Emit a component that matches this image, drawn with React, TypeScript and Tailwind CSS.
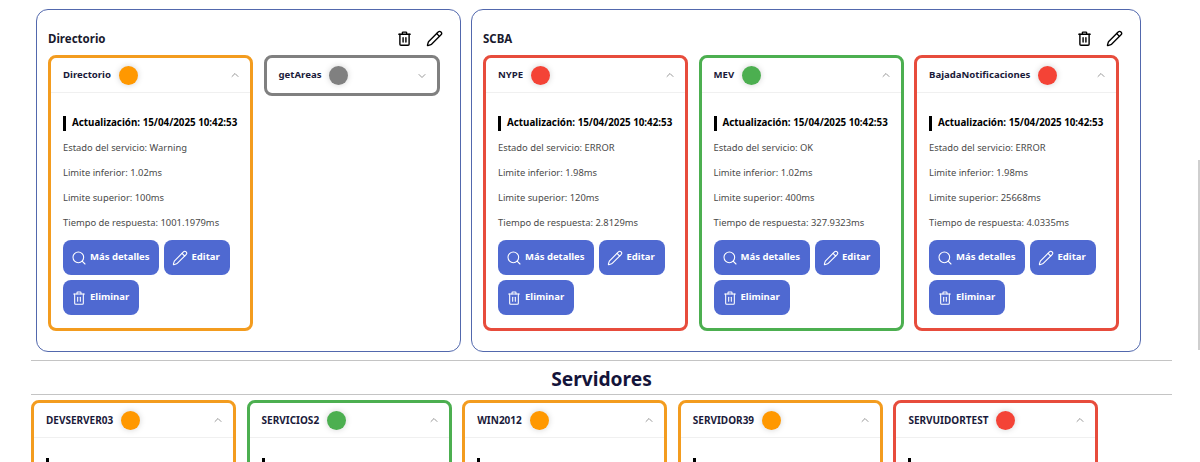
import { ChevronDown, ChevronUp, Pencil, Search } from "lucide-react";

const colors = {
  orange: { border: "border-[#f39c1f]", dot: "bg-[#ff9800]" },
  red: { border: "border-[#e74c3c]", dot: "bg-[#f44336]" },
  green: { border: "border-[#4caf50]", dot: "bg-[#4caf50]" },
  gray: { border: "border-[#808080]", dot: "bg-[#808080]" },
};
type C = keyof typeof colors;

function TrashIcon({ sw, className }: { sw: number; className: string }) {
  return (
    <svg viewBox="0 0 24 24" fill="none" stroke="currentColor" strokeWidth={sw} strokeLinecap="round" strokeLinejoin="round" className={className}>
      <path d="M4 6h16" />
      <path d="M9 6V4a1 1 0 0 1 1-1h4a1 1 0 0 1 1 1v2" />
      <path d="M5.5 6v14A1.5 1.5 0 0 0 7 21.5h10a1.5 1.5 0 0 0 1.5-1.5V6" />
      <path d="M10 11v6" />
      <path d="M14 11v6" />
    </svg>
  );
}

function Dot({ c }: { c: C }) {
  return <span className={`ml-2 h-[19px] w-[19px] shrink-0 rounded-full shadow-[0_0_6px_rgba(0,0,0,0.18)] ${colors[c].dot}`} />;
}

function Btn({ icon, label }: { icon: React.ReactNode; label: string }) {
  return (
    <button className="flex h-[35px] items-center gap-[3px] rounded-lg bg-[#4f69d1] pl-2 pr-[10px] text-[9.5px] font-bold text-white">
      {icon}
      {label}
    </button>
  );
}

type CardData = { name: string; c: C; estado: string; inf: string; sup: string; t: string };

function CardHeader({ name, c, open = true, size = "text-[9.6px]" }: { name: string; c: C; open?: boolean; size?: string }) {
  return (
    <div className={`flex h-[35px] items-center pl-3 pr-[9px] font-bold text-[#1a1a3a] ${size} ${open ? "border-b border-[#f0f0f0]" : ""}`}>
      <span>{name}</span>
      <Dot c={c} />
      {open ? <ChevronUp className="ml-auto h-3 w-3 text-[#999]" /> : <ChevronDown className="ml-auto h-3 w-3 text-[#999]" />}
    </div>
  );
}

function Card({ d }: { d: CardData }) {
  return (
    <div className={`w-[205px] rounded-lg border-[3px] bg-white ${colors[d.c].border}`}>
      <CardHeader name={d.name} c={d.c} />
      <div className="px-3 pb-[13px] pt-[23px]">
        <div className="flex h-[15px] items-center border-l-[3px] border-black pl-[6px] text-[9.8px] font-bold whitespace-nowrap text-black">
          Actualización: 15/04/2025 10:42:53
        </div>
        <div className="mt-[5px] flex flex-col text-[9.4px] text-[#4a4a4a]">
          <p className="flex h-[25px] items-center">Estado del servicio: {d.estado}</p>
          <p className="flex h-[25px] items-center">Limite inferior: {d.inf}</p>
          <p className="flex h-[25px] items-center">Limite superior: {d.sup}</p>
          <p className="flex h-[25px] items-center">Tiempo de respuesta: {d.t}</p>
        </div>
        <div className="mt-[4px] flex flex-wrap gap-[5px]">
          <Btn icon={<Search className="h-4 w-4" strokeWidth={1.6} />} label="Más detalles" />
          <Btn icon={<Pencil className="h-4 w-4" strokeWidth={1.6} />} label="Editar" />
          <Btn icon={<TrashIcon sw={1.6} className="h-4 w-4" />} label="Eliminar" />
        </div>
      </div>
    </div>
  );
}

function Group({ title, width, children }: { title: string; width: string; children: React.ReactNode }) {
  return (
    <section className={`h-[343px] rounded-xl border border-[#5268ad] px-[11px] ${width}`}>
      <div className="flex h-[45px] items-center justify-between pr-[6px] pt-[12px]">
        <h2 className="text-[11.5px] font-bold text-[#1a1a2e]">{title}</h2>
        <div className="flex items-center gap-[13px] text-black">
          <TrashIcon sw={2} className="h-[17px] w-[17px]" />
          <Pencil className="h-[17px] w-[17px]" strokeWidth={1.9} />
        </div>
      </div>
      <div className="flex items-start gap-[10.5px]">{children}</div>
    </section>
  );
}

function ServerCard({ name, c }: { name: string; c: C }) {
  return (
    <div className={`h-[80px] w-[205px] rounded-lg border-[3px] bg-white ${colors[c].border}`}>
      <CardHeader name={name} c={c} size="text-[10px]" />
      <div className="ml-3 mt-[20px] h-[15px] border-l-[3px] border-black" />
    </div>
  );
}

export default function App() {
  return (
    <div className="relative h-[462px] overflow-hidden bg-white font-['Noto_Sans',sans-serif]">
      <div className="w-[1172px] pl-[31px] pt-[9px]">
        <div className="flex gap-[10px] pl-[5px]">
          <Group title="Directorio" width="w-[425px]">
            <Card d={{ name: "Directorio", c: "orange", estado: "Warning", inf: "1.02ms", sup: "100ms", t: "1001.1979ms" }} />
            <div className={`w-[176px] rounded-lg border-[3px] bg-white ${colors.gray.border}`}>
              <CardHeader name="getAreas" c="gray" open={false} />
            </div>
          </Group>
          <Group title="SCBA" width="w-[670px]">
            <Card d={{ name: "NYPE", c: "red", estado: "ERROR", inf: "1.98ms", sup: "120ms", t: "2.8129ms" }} />
            <Card d={{ name: "MEV", c: "green", estado: "OK", inf: "1.02ms", sup: "400ms", t: "327.9323ms" }} />
            <Card d={{ name: "BajadaNotificaciones", c: "red", estado: "ERROR", inf: "1.98ms", sup: "25668ms", t: "4.0335ms" }} />
          </Group>
        </div>
        <hr className="mt-[8px] border-[#c4c4c4]" />
        <h2 className="flex h-[33px] items-center justify-center pt-[4px] text-[19.2px] font-bold text-[#14143a]">Servidores</h2>
        <hr className="border-[#c4c4c4]" />
        <div className="mt-[5px] flex gap-[10.6px]">
          <ServerCard name="DEVSERVER03" c="orange" />
          <ServerCard name="SERVICIOS2" c="green" />
          <ServerCard name="WIN2012" c="orange" />
          <ServerCard name="SERVIDOR39" c="orange" />
          <ServerCard name="SERVUIDORTEST" c="red" />
        </div>
      </div>
      <div className="absolute right-0 top-[160px] h-[190px] w-[2px] bg-[#cfcfcf]" />
    </div>
  );
}
